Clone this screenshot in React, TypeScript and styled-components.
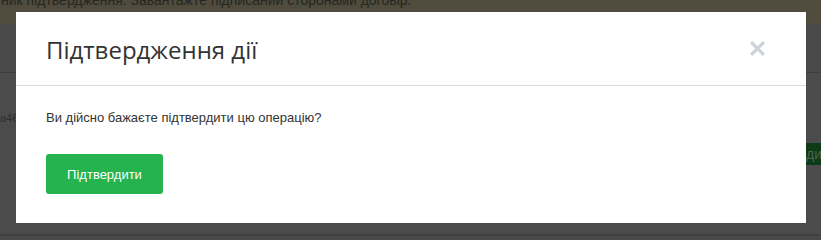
import React from "react";
import styled, { createGlobalStyle } from "styled-components";

const Global = createGlobalStyle`
  html, body { margin: 0; padding: 0; background: #4b4b4b; }
  body { font-family: "Liberation Sans", Arial, sans-serif; }
`;

const Page = styled.div`
  position: relative;
  width: 821px;
  height: 240px;
  overflow: hidden;
  background: #4b4b4b;
  display: flex;
  flex-direction: column;
`;

const Notice = styled.div`
  height: 24px;
  flex: none;
  background: #4f4c3e;
  overflow: hidden;
  padding-left: 1px;
`;

const NoticeText = styled.div`
  margin-top: -10px;
  font-size: 14px;
  line-height: 20px;
  color: #27261f;
  white-space: nowrap;
`;

const Toolbar = styled.div`
  height: 48px;
  flex: none;
  border-bottom: 1px solid #3e3e3e;
  background: #4a4a4a;
`;

const ContentRow = styled.div`
  flex: 1;
  display: flex;
  justify-content: space-between;
  align-items: flex-start;
  padding-top: 37px;
`;

const Hash = styled.span`
  font-size: 11px;
  color: #2e2e2e;
  margin-top: 2px;
`;

const BgButton = styled.div`
  background: #0e3a18;
  color: #4a6650;
  font-size: 14px;
  height: 22px;
  line-height: 22px;
  margin-top: 33px;
  padding: 0 0 0 25px;
  width: 15px;
  white-space: nowrap;
  overflow: hidden;
`;

const Footer = styled.div`
  height: 4px;
  flex: none;
  border-top: 2px solid #3f3f3f;
  background: #494949;
`;

const Modal = styled.div`
  position: absolute;
  left: 16px;
  top: 12px;
  width: 790px;
  height: 211px;
  background: #ffffff;
  display: flex;
  flex-direction: column;
`;

const Header = styled.div`
  height: 73px;
  flex: none;
  border-bottom: 1px solid #d9d8e2;
  padding: 0 30px;
  display: flex;
  align-items: center;
  justify-content: space-between;
`;

const Title = styled.h4`
  margin: 0;
  margin-top: 2px;
  font-family: "Open Sans", "Noto Sans", sans-serif;
  font-weight: 400;
  font-size: 24px;
  color: #333333;
`;

const Close = styled.button`
  border: none;
  background: transparent;
  padding: 0;
  margin-right: 10px;
  width: 18px;
  height: 18px;
  display: flex;
  align-items: center;
  justify-content: center;
  cursor: pointer;
`;

const Body = styled.div`
  padding: 22px 30px 0;
`;

const Question = styled.p`
  margin: 0;
  font-size: 13px;
  line-height: 20px;
  color: #333333;
`;

const ConfirmButton = styled.button`
  margin-top: 26px;
  width: 117px;
  height: 40px;
  border: none;
  border-radius: 3px;
  background: #24b34f;
  color: #ffffff;
  font-family: "Liberation Sans", Arial, sans-serif;
  font-size: 13px;
  cursor: pointer;
`;

export default function App() {
  return (
    <>
      <Global />
      <Page>
        <Notice>
          <NoticeText>
            ник підтвердження. Завантажте підписаний сторонами договір.
          </NoticeText>
        </Notice>
        <Toolbar />
        <ContentRow>
          <Hash>a46</Hash>
          <BgButton>дити</BgButton>
        </ContentRow>
        <Footer />
        <Modal>
          <Header>
            <Title>Підтвердження дії</Title>
            <Close aria-label="close">
              <svg width="17" height="17" viewBox="0 0 16 16">
                <path
                  d="M2 2 L14 14 M14 2 L2 14"
                  stroke="#cdd1d9"
                  strokeWidth="3"
                  strokeLinecap="butt"
                />
              </svg>
            </Close>
          </Header>
          <Body>
            <Question>Ви дійсно бажаєте підтвердити цю операцію?</Question>
            <ConfirmButton>Підтвердити</ConfirmButton>
          </Body>
        </Modal>
      </Page>
    </>
  );
}
